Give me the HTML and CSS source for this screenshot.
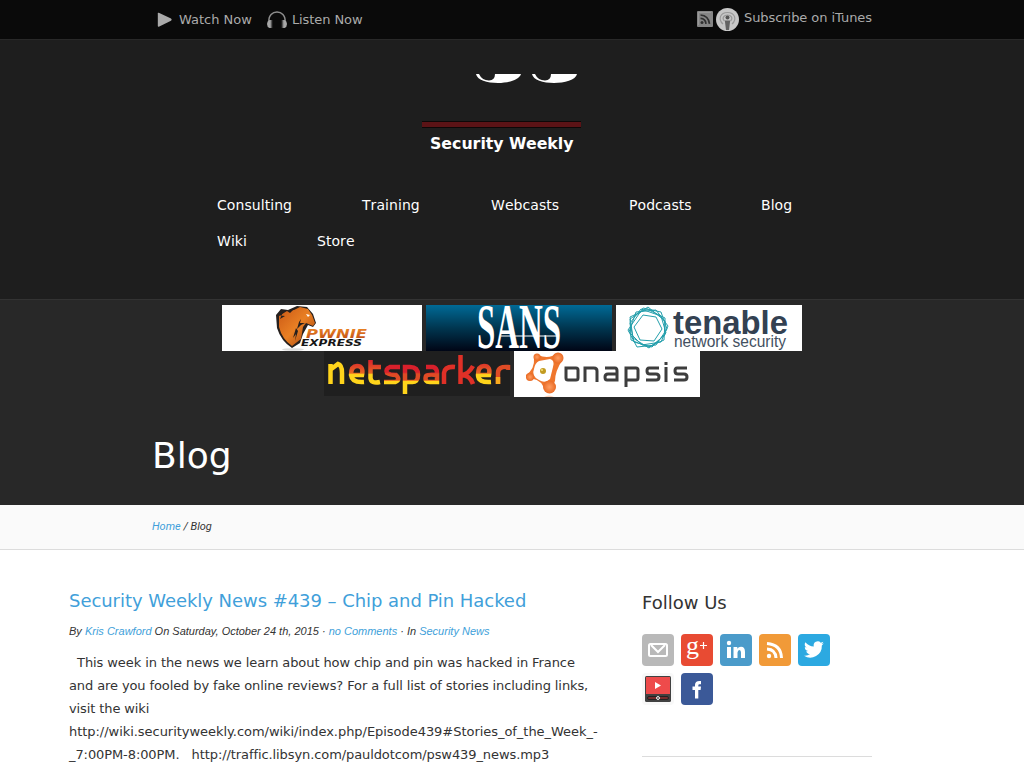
FILE: index.html
```html
<!DOCTYPE html>
<html lang="en">
<head>
<meta charset="utf-8">
<title>Blog - Security Weekly</title>
<link rel="stylesheet" href="styles.css">
</head>
<body>
<div class="topbar">
  <div class="wrap topbar-inner">
    <div class="listen">
      <svg class="ico-play" width="16" height="16" viewBox="0 0 16 16"><path d="M.8 1.500Q.8.500 1.800.8L14 6.500Q15.500 7.700 14 8.800L1.800 14.800Q.8 15 .8 14z" fill="#aaa"/></svg>
      <a>Watch Now</a>
      <svg class="ico-phones" width="22" height="18" viewBox="0 0 22 18"><path d="M3 11C1.500-2.300 20.500-2.300 19 11" fill="none" stroke="#8d8d8d" stroke-width="1.500"/><path d="M5 9v8H3.500Q1 16 1 13t2.500-4zM17 9v8h1.500Q21 16 21 13t-2.500-4z" fill="#a8a8a8"/><path d="M5.500 9v8M16.500 9v8" stroke="#555" stroke-width="1.500"/></svg>
      <a>Listen Now</a>
    </div>
    <div class="subscribe">
      <svg width="16" height="16" viewBox="0 0 16 16"><rect width="16" height="16" rx="1" fill="#858585"/><path d="M1.500 14V1.500H14" fill="none" stroke="#999"/><circle cx="5" cy="11.500" r="1.500" fill="#303030"/><path d="M3.500 7.300Q8.500 7.500 9 12.800M3.500 4Q11.500 4.500 12.500 12.800" fill="none" stroke="#303030" stroke-width="1.700"/></svg>
      <svg class="ico-pod" width="23" height="23" viewBox="0 0 23 23"><circle cx="11.500" cy="11.500" r="11.500" fill="#c7c7c7"/><path d="M7 16C1.500 11 4.500 4.500 11.500 4.500S21.500 11 16 16M8.500 13C5.500 10 8 7 11.500 7s6 3 3 6" fill="none" stroke="#999" stroke-width="1.200"/><circle cx="11.500" cy="9.500" r="2" fill="#555"/><path d="M8.800 12.500h5.400L13 22h-3z" fill="#626262"/></svg>
      <a>Subscribe on iTunes</a>
    </div>
  </div>
</div>

<header class="header">
  <svg class="logo" width="160" height="84" viewBox="0 0 160 84">
    <g fill="#fff"><path d="M54 0H99C97 6 86 9 76 9C65 9 55 6 54 0z"/><path d="M110 0H155C154 6 142 9 132 9C121 9 111 6 110 0z"/></g>
    <path d="M57 0H73Q73 6 67 6.500Q60 6.500 57 0zM113 0H129Q129 6 123 6.500Q116 6.500 113 0z" fill="#1e1e1e"/>
    <rect y="47" width="159" height="7" fill="#0d0808"/><rect y="48" width="159" height="5" fill="#5b1316"/>
    <text x="8" y="75" textLength="143.500" lengthAdjust="spacingAndGlyphs" class="logo-name">Security Weekly</text>
  </svg>
  <nav class="nav"><a class="w75">Consulting</a><a class="w59">Training</a><a class="w68">Webcasts</a><a class="w62">Podcasts</a><a>Blog</a><a class="w30">Wiki</a><a>Store</a></nav>
</header>

<section class="banner">
  <div class="sponsors">
    <svg width="200" height="46" viewBox="0 0 200 46">
      <defs>
        <linearGradient id="horse" x1="0" y1="0" x2="1" y2="1"><stop offset="0" stop-color="#ca5815"/><stop offset=".5" stop-color="#e98024"/><stop offset="1" stop-color="#9e3b0a"/></linearGradient>
        <linearGradient id="pwnie" x1="0" y1="0" x2="0" y2="1"><stop offset="0" stop-color="#f08a25"/><stop offset="1" stop-color="#b84612"/></linearGradient>
      </defs>
      <rect width="200" height="46" fill="#fff"/>
      <ellipse cx="71" cy="44.500" rx="11" ry="1.300" fill="#ddd"/>
      <path d="M54 10L59 4L66 5L75 1L85 2L91 9L94 18L91 22L86 20L81 29L78 38L70 43Q59 36 55 23z" fill="#26201e"/>
      <path d="M57 11L65 6L72 5L78 2L86 4L90 10L93 18L91 21L84 18L81 22L79 34L70 41Q60 34 57 22z" fill="url(#horse)"/>
      <path d="M55 10L61 7L58 14L63 11M65 6L73 3L68 8M79 14L78 18L83 18L79 20L75 24L77 17zM74 23L71 33L74 29L73 36L76 26" fill="#26201e"/>
      <path d="M84 9l4 1-2 2z" fill="#fff"/>
      <text x="84" y="33" textLength="61" lengthAdjust="spacingAndGlyphs" class="pwnie" fill="url(#pwnie)">PWNIE</text>
      <text x="79" y="41" textLength="61" lengthAdjust="spacingAndGlyphs" class="express">EXPRESS</text>
    </svg>
    <svg width="186" height="46" viewBox="0 0 186 46">
      <defs><linearGradient id="sans" x1="0" y1="0" x2="0" y2="1"><stop offset="0" stop-color="#006a96"/><stop offset=".5" stop-color="#003650"/><stop offset="1" stop-color="#000515"/></linearGradient></defs>
      <rect width="186" height="46" fill="url(#sans)"/>
      <text transform="translate(51 43) scale(1 1.600)" textLength="84" lengthAdjust="spacingAndGlyphs" class="sans">SANS</text>
      <path d="M75 31H132" stroke="#fff"/>
    </svg>
    <svg width="186" height="46" viewBox="0 0 186 46">
      <rect width="186" height="46" fill="#fff"/>
      <g fill="none" stroke="#249fac" stroke-width="1"><path d="M27 3L45 7L51 24L40 40L21 42L12 25z"/><path d="M32 2L49 16L48 35L32 42L15 35L14 14z"/><path d="M20 7L40 5L52 21L45 37L26 40L13 27z"/><path d="M14 12L31 4L49 13L49 30L33 43L17 33z"/><path d="M25 4L45 11L50 28L36 42L18 37L14 18z"/><path d="M27 10L40 12L46 24L38 36L24 35L18 22z"/></g>
      <text x="57" y="29" textLength="115" lengthAdjust="spacingAndGlyphs" class="tenable">tenable</text>
      <text x="58" y="42" textLength="112" lengthAdjust="spacingAndGlyphs" class="network">network security</text>
    </svg>
    <svg width="186" height="46" viewBox="0 0 186 46">
      <defs>
        <linearGradient id="spark" gradientUnits="userSpaceOnUse" x1="0" y1="5" x2="0" y2="41"><stop offset=".45" stop-color="#d9202b"/><stop offset=".5" stop-color="#df4b25"/><stop offset=".67" stop-color="#df4b25"/><stop offset=".7" stop-color="#ffd41b"/></linearGradient>
        <linearGradient id="spark-left" gradientUnits="userSpaceOnUse" x1="0" y1="9" x2="0" y2="35"><stop offset="0" stop-color="#d9202b"/><stop offset=".5" stop-color="#e66725"/><stop offset=".56" stop-color="#ffd41b"/></linearGradient>
      </defs>
      <rect width="186" height="45" fill="#1f1f1f"/>
      <g class="spark" fill="none" stroke="url(#spark)">
        <path d="M6.500 33V13M6 19L14 13Q18 14 18 22V33" stroke="#ffd41b"/>
        <g stroke="url(#spark-left)"><path d="M28 24H38Q40 15 33 15Q27 15 27 24Q28 32 40 31"/><path d="M46.500 9V27Q47 33 56 31M45 16H57"/></g>
        <path d="M76 16H66Q61 18 63 22Q66 24 72 24Q77 29 71 31H60"/>
        <path d="M81 43V16H86Q94 16 94 24T87 31H81"/><path d="M102 16H109Q113 17 113 22V31H106Q100 31 102 25Q104 23 113 24"/><path d="M120 33V22Q121 15 131 16" stroke="#df3027"/><path d="M136.500 33V4M149 15Q144 24 137 24Q146 24 149 33" stroke="#df3027"/><path d="M155 24H165Q167 15 160 15Q154 15 154 24Q154 32 167 31" stroke="url(#spark-left)"/><path d="M174 33V22Q174 15 184 16V19" stroke="#df4b25"/><path d="M174.010 26L174 33" stroke="#f9aa1e"/>
      </g>
    </svg>
    <svg width="186" height="46" viewBox="0 0 186 46">
      <defs><radialGradient id="orb"><stop stop-color="#ff9d61"/><stop offset="1" stop-color="#e96b25"/></radialGradient></defs>
      <rect width="186" height="46" fill="#fff"/>
      <path d="M24 4Q35 9 43 2L49 8Q41 20 41 30L35 42L29 35Q25 27 12 27V24Q21 18 20 7z" fill="#ef762d"/>
      <path d="M25 10L36 8Q41 9 39 16L36 28Q31 33 25 29Q17 25 20 18Q21 12 25 10z" fill="#fff"/>
      <circle cx="23" cy="6" r="3.500" fill="url(#orb)"/><circle cx="44" cy="7" r="5.500" fill="url(#orb)"/><circle cx="16" cy="26" r="4" fill="url(#orb)"/><circle cx="35.500" cy="36" r="6.500" fill="url(#orb)"/><circle cx="29" cy="20" r="3" fill="#c29b21"/><circle cx="28" cy="19" r="1" fill="#f9e477"/><path d="M30 46Q35 43 40 46" fill="#fbd3bb"/>
      <g class="onapsis"><path d="M52 17H62Q64 17 64 19V27Q64 29 62 29H54Q52 29 52 27z"/><path d="M71 31V17H80Q83 17 83 20V31"/><path d="M91 17H101Q103 17 103 20V29H93Q91 29 91 26Q91 23 94 23H103"/><path d="M112 36V17H122Q124 17 124 19V27Q124 29 122 29H112"/><path d="M145 17H135Q133 17 133 20Q133 23 136 23H142Q145 23 145 26T142 29H132"/><path d="M152 31V16M152 11V14"/><path d="M173 17H163Q161 17 161 20Q161 23 164 23H170Q173 23 173 26T170 29H160"/></g>
    </svg>
  </div>
  <h1 class="wrap page-title">Blog</h1>
</section>

<div class="crumbs"><div class="wrap"><a>Home</a> / Blog</div></div>

<main class="content">
  <article class="post">
    <h2>Security Weekly News #439 – Chip and Pin Hacked</h2>
    <p class="meta">By <a>Kris Crawford</a> On Saturday, October 24 th, 2015 · <a>no Comments</a> · In <a>Security News</a></p>
    <p class="text">&nbsp; This week in the news we learn about how chip and pin was hacked in France<br><span class="tight">and are you fooled by fake online reviews? For a full list of stories including links,<br>visit the wiki</span><br><span class="url">http://wiki.securityweekly.com/wiki/index.php/Episode439#Stories_of_the_Week_-</span><br>_7:00PM-8:00PM. &nbsp; http://traffic.libsyn.com/pauldotcom/psw439_news.mp3</p>
  </article>
  <aside class="sidebar">
    <h3>Follow Us</h3>
    <div class="social">
      <svg viewBox="0 0 32 32"><rect width="32" height="32" rx="4" fill="#b9b9b9"/><rect x="7" y="10" width="18" height="12" rx="1.500" fill="none" stroke="#fff" stroke-width="2"/><path d="M9 11L16 18L23 11" fill="none" stroke="#fff" stroke-width="2"/></svg>
      <svg viewBox="0 0 32 32"><rect width="32" height="32" rx="4" fill="#e84b33"/><text x="5" y="20" class="gplus">g</text><path d="M19 11.500h7M22.500 8v7" stroke="#fff" stroke-width="1.200"/></svg>
      <svg viewBox="0 0 32 32"><rect width="32" height="32" rx="4" fill="#4b9bca"/><g fill="#fff"><circle cx="9" cy="9" r="2.200"/><path d="M7 13h4v11H7zM13.500 13h3.800v1.700Q18.500 12.700 21 12.700Q25 12.700 25 18v6h-4v-5.500Q21 16 19.400 16T17.500 18.500V24h-4z"/></g></svg>
      <svg viewBox="0 0 32 32"><rect width="32" height="32" rx="4" fill="#f19a38"/><circle cx="10" cy="22" r="2.200" fill="#fff"/><path d="M8 15Q16.500 15.500 17 24M8 9.500Q22 10.500 22.500 24" fill="none" stroke="#fff" stroke-width="3"/></svg>
      <svg viewBox="0 0 32 32"><rect width="32" height="32" rx="4" fill="#2ca9e1"/><path transform="translate(6 5.500) scale(.83)" d="M23.900 4.600a10 10 0 0 1-2.800.8 5 5 0 0 0 2.200-2.700c-1 .6-2 1-3.100 1.200a4.900 4.900 0 0 0-8.400 4.500A14 14 0 0 1 1.700 3.200a4.900 4.900 0 0 0 1.500 6.500 5 5 0 0 1-2.200-.6 4.900 4.900 0 0 0 3.900 4.900 5 5 0 0 1-2.200.1 4.900 4.900 0 0 0 4.600 3.400A10 10 0 0 1 0 19.500 14 14 0 0 0 21.500 7.100a10 10 0 0 0 2.400-2.500z" fill="#fff"/></svg>
      <svg viewBox="0 0 32 32"><rect width="32" height="32" rx="4" fill="#f8f8f8"/><rect x="3" y="3" width="26" height="26" rx="1.500" fill="#414141"/><rect x="4" y="4" width="24" height="17" fill="#ee4b4b"/><path d="M13 9l6 3.500-6 3.500z" fill="#fff"/><rect x="5.500" y="23.500" width="21" height="3" rx="1.500" fill="#752c2d" stroke="#222"/><circle cx="16" cy="25" r="1.500" fill="#555" stroke="#eee"/></svg>
      <svg viewBox="0 0 32 32"><rect width="32" height="32" rx="4" fill="#3b5998"/><path d="M14 25.500V17h-2.500v-3.500H14v-1.500Q14 8 18.500 8H20v3.200h-1.500q-1.200 0-1.200 1.300v1h2.700l-.4 3.500H17.300v8.500z" fill="#fff"/></svg>
    </div>
    <hr>
  </aside>
</main>
</body>
</html>
```
FILE: styles.css
```css
* { box-sizing: border-box; }
html { overflow: hidden; }
body { margin: 0; height: 768px; overflow: hidden; background: #fff; color: #333; font: 13px/23px "DejaVu Sans", sans-serif; }
svg { display: block; overflow: visible; }
h1, h2, h3, p { margin: 0; font-weight: normal; }
a { color: #419fda; text-decoration: none; }
.wrap { width: 720px; margin: 0 auto; }
.topbar { height: 40px; background: #0a0a0a; border-bottom: 1px solid #292929; }
.topbar a { color: #aaa; }
.topbar-inner { display: flex; justify-content: space-between; }
.listen { display: flex; align-items: center; height: 39px; padding-left: 5px; }
.ico-play { margin-right: 6px; }
.ico-phones { margin: 0 4px 0 14px; }
.listen a:last-child { letter-spacing: -.08px; }
.subscribe { display: flex; align-items: center; height: 38px; }
.subscribe a { margin-top: -3px; letter-spacing: -.06px; }
.ico-pod { margin: 0 5px 0 3px; }
.header { height: 260px; padding-top: 34px; background: #1e1e1e; border-bottom: 1px solid #333; }
.logo { margin: 0 auto 0 422px; }
.logo-name { font: bold 16.500px "DejaVu Sans", sans-serif; fill: #fff; }
.nav { display: flex; flex-wrap: wrap; column-gap: 70px; width: 600px; margin: 29px 0 0 217px; font-size: 14px; line-height: 36px; letter-spacing: .06px; font-kerning: none; white-space: nowrap; }
.nav a { color: #fff; }
.w75 { width: 75px; }
.w59 { width: 59px; }
.w68 { width: 68px; }
.w62 { width: 62px; }
.w30 { width: 30px; }
.banner { height: 205px; padding-top: 5px; background: #282828; }
.sponsors { display: flex; flex-wrap: wrap; justify-content: center; column-gap: 4px; width: 600px; margin: 0 auto; }
.pwnie { font: italic bold 12px "DejaVu Sans", sans-serif; }
.express { font: italic bold 9.500px "DejaVu Sans", sans-serif; fill: #171717; }
.sans { font: bold 40px "Liberation Serif", serif; fill: #fff; }
.tenable { font: bold 34px "Liberation Sans", sans-serif; fill: #334152; }
.network { font: 16px "Liberation Sans", sans-serif; fill: #435061; }
.spark { stroke-width: 4.500; }
.onapsis { fill: none; stroke: #3d3d3d; stroke-width: 3; }
.page-title { padding-top: 34px; color: #fff; font-size: 36px; line-height: 50px; }
.crumbs { height: 45px; background: #fafafa; border-bottom: 1px solid #dcdcdc; font: italic 11px/43px Roboto, sans-serif; }
.content { display: flex; width: 803px; margin-left: 69px; padding-top: 37px; }
.post { width: 573px; white-space: nowrap; }
.post h2 { color: #419fda; font-size: 18px; line-height: 28px; letter-spacing: -.05px; }
.meta { padding-top: 5px; font: italic 11px/23px "Liberation Sans", sans-serif; }
.text { padding-top: 8px; letter-spacing: -.09px; }
.tight { letter-spacing: -.105px; }
.url { letter-spacing: -.04px; }
.sidebar { width: 230px; }
.sidebar h3 { padding-top: 2px; font-size: 18px; line-height: 28px; }
.social { display: flex; flex-wrap: wrap; gap: 7px; width: 200px; margin-top: 17px; }
.social svg { width: 32px; height: 32px; }
.gplus { font: 26px "Liberation Serif", serif; fill: #fff; }
.sidebar hr { margin: 51px 0 0; border: 0; border-top: 1px solid #dcdcdc; }
```
